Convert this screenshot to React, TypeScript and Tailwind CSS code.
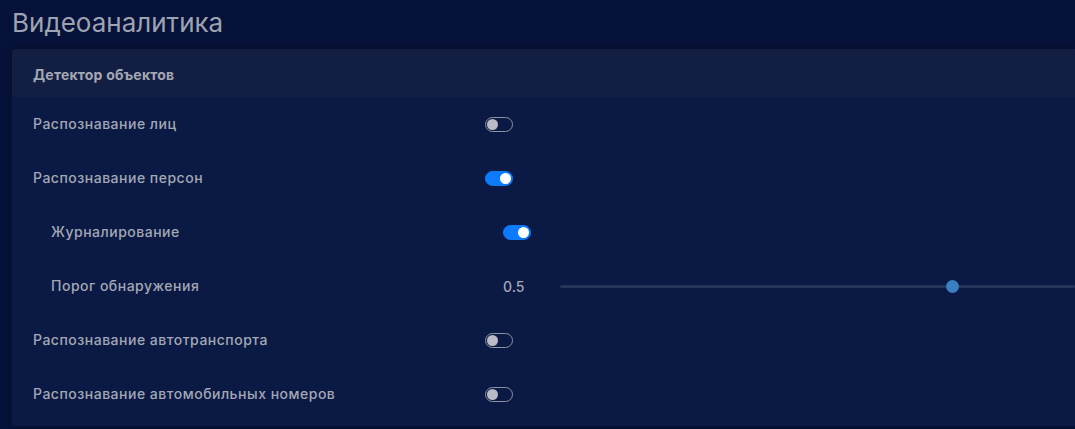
import { useState } from 'react'

type Row = {
  id: string
  label: string
  nested?: boolean
  kind: 'toggle' | 'slider'
  value?: boolean | number
}

const rows: Row[] = [
  { id: 'faces', label: 'Распознавание лиц', kind: 'toggle', value: false },
  { id: 'persons', label: 'Распознавание персон', kind: 'toggle', value: true },
  { id: 'log', label: 'Журналирование', nested: true, kind: 'toggle', value: true },
  { id: 'threshold', label: 'Порог обнаружения', nested: true, kind: 'slider', value: 0.5 },
  { id: 'vehicles', label: 'Распознавание автотранспорта', kind: 'toggle', value: false },
  { id: 'plates', label: 'Распознавание автомобильных номеров', kind: 'toggle', value: false },
]

function Switch({ on, onChange }: { on: boolean; onChange: () => void }) {
  return (
    <button
      onClick={onChange}
      className={`relative h-[15px] w-[28px] rounded-full border ${
        on ? 'border-[#0d7bff] bg-[#0d7bff]' : 'border-[#8d93a3] bg-transparent'
      }`}
    >
      <span
        className={`absolute top-[1px] h-[11px] w-[11px] rounded-full ${
          on ? 'left-[14px] bg-white' : 'left-[1px] bg-[#b9bcc4]'
        }`}
      />
    </button>
  )
}

export default function App() {
  const [state, setState] = useState<Record<string, boolean>>({
    faces: false,
    persons: true,
    log: true,
    vehicles: false,
    plates: false,
  })

  return (
    <div
      className="h-[429px] w-[1075px] overflow-hidden bg-[#061239] pl-3"
      style={{ fontFamily: 'Inter, "Noto Sans", sans-serif' }}
    >
      <h1 className="pt-[6px] text-[26px] leading-[34px] text-[#9ea3b2]">Видеоаналитика</h1>

      {/* Object detector card */}
      <div className="mt-[9px] overflow-hidden rounded-tl-[4px] bg-[#0b1a44] pb-[5px] shadow-[0_0_8px_rgba(0,0,0,0.35)]">
        <div className="flex h-[48px] items-center bg-[#131f42] pt-[2px] pl-[21px] text-[14px] font-bold tracking-[0.2px] text-[#a3a8b6]">
          Детектор объектов
        </div>

        {rows.map((row) => (
          <div
            key={row.id}
            className={`flex h-[54px] items-center text-[14px] font-medium tracking-[0.5px] text-[#a3a8b6] ${
              row.nested ? 'pl-[39px]' : 'pl-[21px]'
            }`}
          >
            <div className="w-[452px] shrink-0 pb-[2px]">{row.label}</div>
            {row.kind === 'toggle' ? (
              <Switch
                on={state[row.id]}
                onChange={() => setState((s) => ({ ...s, [row.id]: !s[row.id] }))}
              />
            ) : (
              <div className="flex flex-1 items-center">
                <span className="w-[57px] shrink-0 text-[14px] tracking-normal">{row.value}</span>
                <div className="relative h-[3px] flex-1 rounded bg-[#26335a]">
                  <span className="absolute top-[-5px] left-[386px] h-[13px] w-[13px] rounded-full bg-[#3a7fc1]" />
                </div>
              </div>
            )}
          </div>
        ))}
      </div>
    </div>
  )
}
